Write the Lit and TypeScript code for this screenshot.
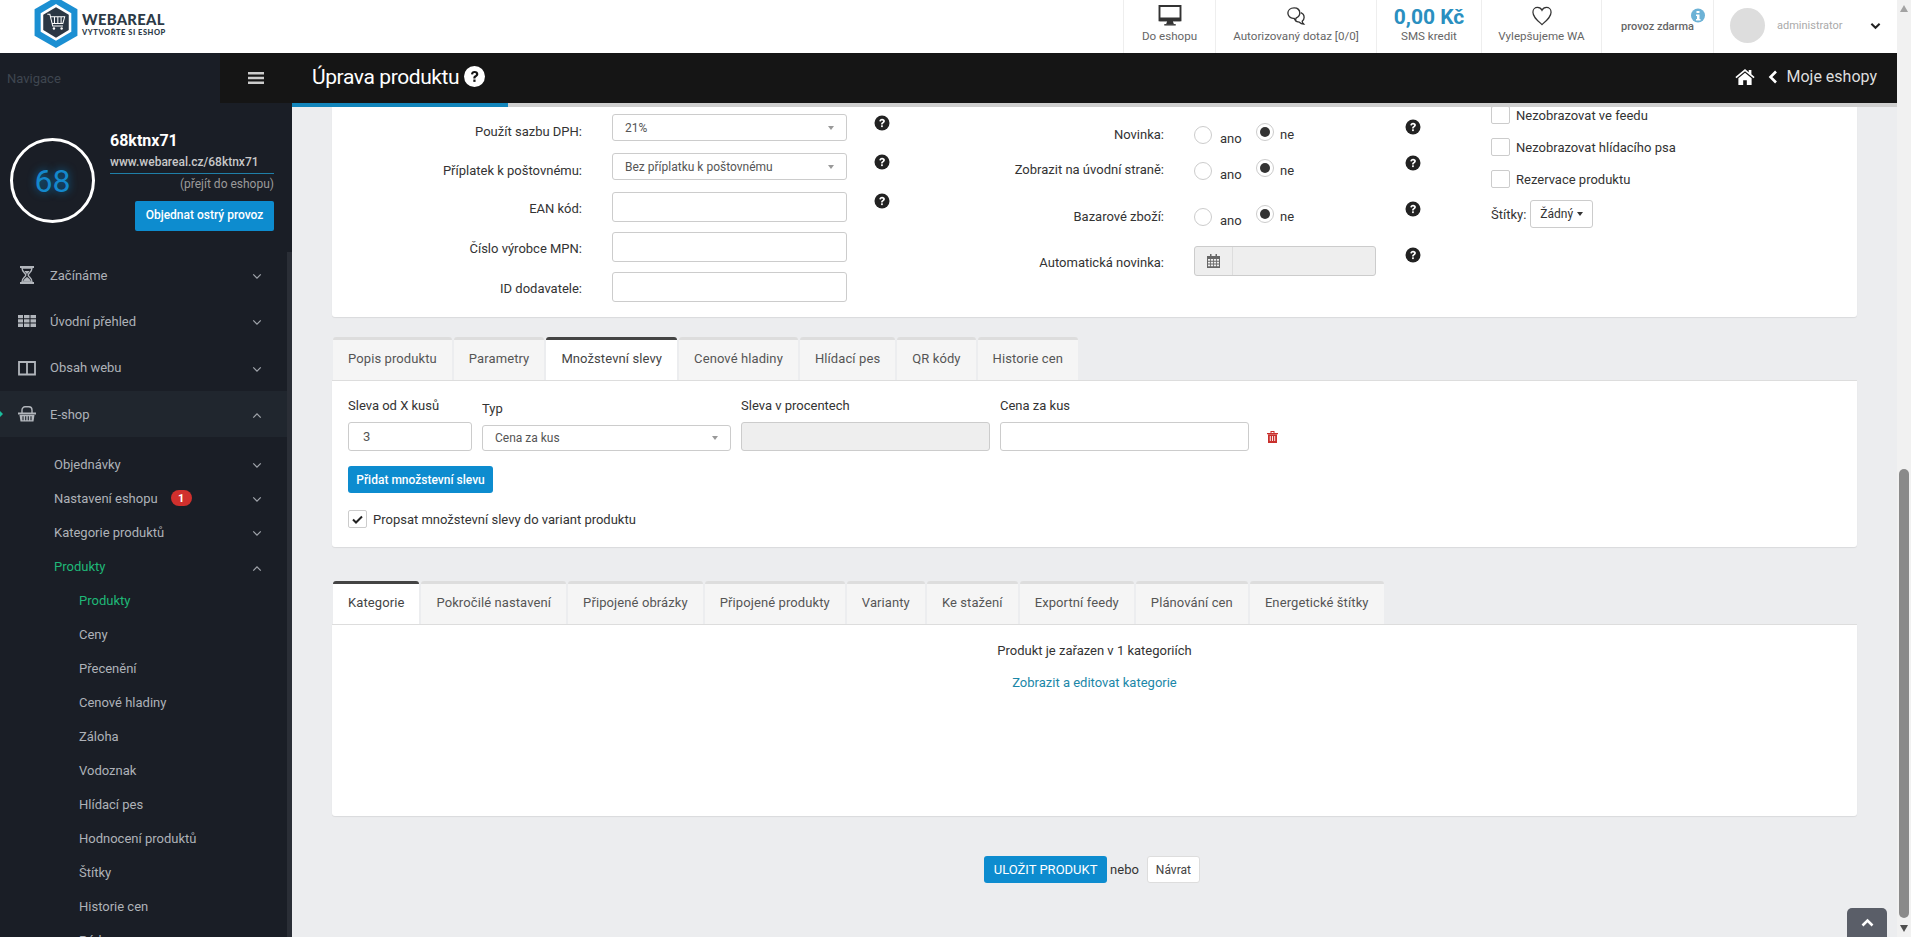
import { LitElement, css, html, svg } from 'lit'
import { customElement } from 'lit/decorators.js'

const chevronDown = html`<svg class="chev" viewBox="0 0 12 8"><path d="M1.5 1.5 6 6l4.5-4.500" fill="none" stroke="currentColor" stroke-width="1.5"/></svg>`
const chevronUp = html`<svg class="chev" viewBox="0 0 12 8"><path d="M1.5 6.500 6 2l4.5 4.500" fill="none" stroke="currentColor" stroke-width="1.5"/></svg>`

const helpIcon = html`<svg class="help" viewBox="0 0 16 16">
  <circle cx="8" cy="8" r="7.5" fill="#222"/>
  <path d="M5.300 6.300C5.400 4.700 6.500 3.800 8.100 3.800c1.600 0 2.800.9 2.800 2.300 0 1.100-.6 1.700-1.400 2.200-.6.400-.8.600-.8 1.200H7.100c0-1.200.3-1.700 1.100-2.200.6-.4.900-.6.900-1.100 0-.5-.4-.8-1-.8-.7 0-1.100.4-1.100 1z" fill="#fff"/>
  <rect x="7.100" y="10.300" width="1.700" height="1.800" fill="#fff"/>
</svg>`

const icons: Record<string, unknown> = {
  hourglass: svg`<path d="M2 1h14M2 17h14" stroke="currentColor" stroke-width="2" fill="none"/><path d="M4 2c0 4.500 3.800 5 3.800 7S4 11.500 4 16h10c0-4.500-3.800-5-3.800-7S14 6.500 14 2z" fill="none" stroke="currentColor" stroke-width="1.400"/><path d="M6.500 5h5c-.5 1.500-2.500 2.500-2.500 3.500C9 7.500 7 6.500 6.500 5zM5 15.500c.5-2.500 3-3.500 4-4.500 1 1 3.500 2 4 4.500z" fill="currentColor"/>`,
  grid: svg`<path d="M0 3h5v3.300H0zM6 3h5.500v3.300H6zM12.500 3H18v3.300h-5.500zM0 7.300h5v3.300H0zM6 7.300h5.500v3.300H6zM12.500 7.300H18v3.300h-5.500zM0 11.600h5v3.300H0zM6 11.600h5.500v3.300H6zM12.500 11.600H18v3.300h-5.500z" fill="currentColor"/>`,
  columns: svg`<path d="M1 3h16v12.500H1zM9 3v12.500" fill="none" stroke="currentColor" stroke-width="1.800"/>`,
  basket: svg`<path d="M4 8V5c0-2 1.500-3.200 3-3.200h4c1.500 0 3 1.200 3 3.200v3" fill="none" stroke="currentColor" stroke-width="1.400"/><path d="M0 7.500h18v2H0zM1.500 10h15l-1 6.500h-13z" fill="currentColor"/><path d="M5 11.300v4M7.700 11.300v4M10.300 11.300v4M13 11.300v4" stroke="#1f252d" stroke-width="1.100"/>`,
}

type MenuItem = { label: string; icon?: string; open?: boolean; active?: boolean; badge?: string }

const mainMenu: MenuItem[] = [
  { label: 'Začínáme', icon: 'hourglass' },
  { label: 'Úvodní přehled', icon: 'grid' },
  { label: 'Obsah webu', icon: 'columns' },
  { label: 'E-shop', icon: 'basket', open: true, active: true },
]
const subMenu: MenuItem[] = [
  { label: 'Objednávky' },
  { label: 'Nastavení eshopu', badge: '1' },
  { label: 'Kategorie produktů' },
  { label: 'Produkty', open: true, active: true },
]
const subSubMenu = ['Produkty', 'Ceny', 'Přecenění', 'Cenové hladiny', 'Záloha', 'Vodoznak', 'Hlídací pes', 'Hodnocení produktů', 'Štítky', 'Historie cen', 'Párky']

const tabsTop = ['Popis produktu', 'Parametry', 'Množstevní slevy', 'Cenové hladiny', 'Hlídací pes', 'QR kódy', 'Historie cen']
const tabsBottom = ['Kategorie', 'Pokročilé nastavení', 'Připojené obrázky', 'Připojené produkty', 'Varianty', 'Ke stažení', 'Exportní feedy', 'Plánování cen', 'Energetické štítky']

@customElement('app-root')
export class AppRoot extends LitElement {
  static styles = css`
    :host {
      display: block;
      width: 1911px;
      height: 937px;
      overflow: hidden;
      position: relative;
      font-family: Roboto, "Liberation Sans", sans-serif;
      font-size: 13px;
      color: #333;
      background: #ecedef;
    }
    * { box-sizing: border-box; }
    .page { display: flex; height: 937px; }
    .viewport { width: 1897px; display: flex; flex-direction: column; }

    /* native looking page scrollbar */
    .scrollbar { width: 14px; background: #f1f1f1; display: flex; flex-direction: column; align-items: center; justify-content: space-between; }
    .scrollbar .track { flex: 1; width: 100%; padding-top: 452px; padding-bottom: 2px; display: flex; justify-content: center; }
    .scrollbar .thumb { width: 10px; height: 100%; background: #8a8a8a; border-radius: 5px; }
    .arrow { width: 0; height: 0; border-left: 4.5px solid transparent; border-right: 4.5px solid transparent; margin: 5px 0; }
    .arrow.up { border-bottom: 7px solid #a3a3a3; }
    .arrow.down { border-top: 7px solid #505050; }

    /* top white bar */
    header { height: 53px; background: #fff; display: flex; flex: none; }
    .logo { display: flex; align-items: flex-start; padding-left: 32px; flex: 1; }
    .logo svg { width: 48px; height: 50px; display: block; }
    .logo-text { margin-left: 2px; padding-top: 11px; color: #2c3a47; font-family: Lato, sans-serif; font-weight: 900; }
    .logo-text b { display: block; font-size: 14.8px; line-height: 16px; letter-spacing: .3px; font-weight: 900; }
    .logo-text span { display: block; font-size: 7.5px; line-height: 9px; margin-top: 1px; letter-spacing: .55px; }
    .hitem { border-left: 1px solid #eee; display: flex; flex-direction: column; align-items: center; padding-top: 5px; font-size: 11.6px; color: #666; position: relative; }
    .hitem svg { display: block; height: 21px; }
    .hitem .lbl { line-height: 14px; margin-top: 3px; white-space: nowrap; }
    .hitem.w1 { width: 92px; } .hitem.w2 { width: 161px; } .hitem.w3 { width: 105px; } .hitem.w4 { width: 120px; } .hitem.w5 { width: 112px; }
    .kredit { color: #2a8fc0; font-size: 21px; font-weight: 700; line-height: 24px; margin-bottom: -3px; }
    .hitem.w5 { font-size: 11px; }
    .hitem.w5 .lbl { margin-top: 15px; font-weight: 500; }
    .info { position: absolute; right: 8px; top: 5px; width: 14px; height: 15px; }
    .user { width: 184px; border-left: 1px solid #eee; display: flex; align-items: center; padding: 0 0 2px 16px; color: #aaa; font-size: 11px; }
    .avatar { width: 35px; height: 35px; background: #ddd; border-radius: 50%; margin-right: 12px; }
    .user svg { width: 11px; height: 8px; margin-left: 27px; color: #222; }

    .below { flex: 1; display: flex; min-height: 0; }

    /* sidebar */
    aside { width: 292px; background: #1a1e26; display: flex; flex-direction: column; flex: none; overflow: hidden; }
    .navsearch { height: 50px; display: flex; flex: none; justify-content: space-between; align-items: center; padding-left: 7px; color: #3f4650; font-size: 13px; }
    .burger { width: 72px; height: 50px; background: #151515; display: flex; align-items: center; justify-content: center; }
    .burger svg { width: 16px; height: 14px; }
    .profile { height: 149px; flex: none; display: flex; padding: 32px 18px 0 10px; }
    .ring { width: 85px; height: 85px; border: 3px solid #fff; border-radius: 50%; display: flex; align-items: center; justify-content: center; margin-top: 3px; color: #1488cc; font-size: 32px; text-shadow: 0 0 8px #0d6ea8; }
    .pinfo { margin-left: 15px; width: 164px; }
    .pname { color: #fff; font-weight: 700; font-size: 16px; line-height: 20px; margin-top: -4px; }
    .purl { color: #c9c9c9; font-size: 12px; font-weight: 500; line-height: 16px; margin-top: 3px; padding-bottom: 3px; border-bottom: 1px solid #1f7fa8; }
    .pgo { color: #9a9a9a; font-size: 12px; text-align: right; line-height: 16px; margin-top: 2px; }
    .pbtn { display: block; width: 139px; height: 30px; line-height: 29px; text-align: center; background: #0d8ccf; color: #fff; border-radius: 2px; margin: 9px 0 0 auto; font-size: 12px; font-weight: 500; }
    .menuwrap { flex: 1; display: flex; min-height: 0; overflow: hidden; }
    nav { flex: 1; color: #aeb2b8; font-size: 13px; min-width: 0; }
    .sbar { width: 5px; background: #2a2e36; flex: none; }
    .m1 { height: 46.3px; display: flex; align-items: center; padding: 0 25px 0 18px; position: relative; }
    .m1.active { background: #20262e; }
    .m1.active::before { content: ""; position: absolute; left: 0; top: 20px; border-left: 3px solid #1abc9c; border-top: 3px solid transparent; border-bottom: 3px solid transparent; }
    .m1 svg.ic { width: 18px; height: 18px; margin-right: 14px; flex: none; color: #b2b6bc; }
    .m1 span, .m2 span { flex: 1; }
    .chev { width: 10px; height: 7px; color: #a0a4aa; flex: none; margin-top: 3px; }
    .sub { padding-top: 10px; }
    .m2 { height: 34.1px; display: flex; align-items: center; padding: 0 25px 0 54px; }
    .m2 span em { font-style: normal; display: inline-flex; width: 21px; height: 16px; border-radius: 8px; background: #d0302d; color: #fff; font-size: 11px; font-weight: 700; align-items: center; justify-content: center; margin-left: 13px; vertical-align: 1px; }
    .m2.active span { color: #1fb978; }
    .m3 { height: 34px; display: flex; align-items: center; padding-left: 79px; }
    .m3.active { color: #1fb978; }

    /* main area */
    main { flex: 1; display: flex; flex-direction: column; min-width: 0; }
    .titlebar { height: 54px; flex: none; background: #151515; border-bottom: 4px solid #cfcfcf; position: relative; display: flex; align-items: center; justify-content: space-between; padding: 0 20px 3px 20px; color: #fff; }
    .titlebar::after { content: ""; position: absolute; left: 0; bottom: -4px; width: 216px; height: 4px; background: #1285bb; }
    .titlebar h1 { margin: 0; font-weight: 400; font-size: 21px; letter-spacing: -.4px; display: flex; align-items: center; gap: 5px; }
    .titlebar h1 svg { width: 21px; height: 21px; }
    .crumb { display: flex; align-items: center; font-size: 16px; color: #ddd; }
    .crumb svg.home { width: 20px; height: 16px; margin-right: 13px; }
    .crumb svg.back { width: 10px; height: 14px; margin-right: 8px; }

    .content { flex: 1; padding: 0 40px; display: flex; flex-direction: column; min-height: 0; overflow: hidden; position: relative; }
    .card { background: #fff; box-shadow: 0 1px 1px rgba(0,0,0,.08); border-radius: 0 0 3px 3px; }
    .top { height: 210px; display: grid; grid-template-columns: 568px 591px 1fr; flex: none; }

    .col1 { padding-top: 7px; }
    .frow { display: grid; grid-template-columns: 250px 235px 16px; column-gap: 30px; margin-bottom: 10px; }
    .frow label { text-align: right; line-height: 16px; margin-top: 9px; white-space: nowrap; }
    .frow.sel { margin-bottom: 12px; }
    .frow.sel label { margin-top: 10px; }
    .frow .help { margin: 1px 0 0 -3px; }
    .help { width: 16px; height: 16px; display: block; }
    .input { border: 1px solid #ccc; border-radius: 3px; background: #fff; height: 30px; display: flex; align-items: center; padding: 0 14px; color: #555; font-size: 12px; }
    .input.num { font-size: 13px; }
    .input.disabled { background: #eee; }
    .select { height: 27px; justify-content: space-between; padding: 0 12px; color: #555; font-size: 12px; }
    .select i { border-top: 4px solid #999; border-left: 3.5px solid transparent; border-right: 3.5px solid transparent; }

    .col2 { padding-top: 16px; }
    .rrow { display: grid; grid-template-columns: 264px 182px 16px; column-gap: 30px; }
    .rrow label { text-align: right; line-height: 16px; margin-top: 4px; white-space: nowrap; }
    .rrow .help { margin: -4px 0 0 -1px; }
    .rrow.r1 { height: 36px; } .rrow.r2 { height: 46px; } .rrow.r3 { height: 45px; }
    .rrow.r2 label { margin-top: 3px; }
    .radios { display: flex; align-items: flex-start; height: 22px; }
    .radio { width: 18px; height: 18px; border: 1px solid #ccc; border-radius: 50%; background: #fff; display: flex; align-items: center; justify-content: center; flex: none; }
    .radio.on::after { content: ""; width: 10px; height: 10px; border-radius: 50%; background: #333; }
    .radio.off { margin-top: 3px; }
    .radios .t1 { margin: 8px 15px 0 8px; line-height: 16px; width: 21px; }
    .radios .t2 { margin: 4px 0 0 6px; line-height: 16px; }
    .date { display: flex; height: 30px; width: 182px; margin-top: -4px; border: 1px solid #ccc; border-radius: 3px; background: #eee; }
    .date b { width: 38px; border-right: 1px solid #ddd; display: flex; align-items: center; justify-content: center; }
    .date svg { width: 13px; height: 14px; }
    .rrow.r4 label { margin-top: 5px; }
    .rrow.r4 .help { margin-top: -3px; }

    .col3 { margin-top: -1px; }
    .chk { display: flex; align-items: center; height: 18px; margin-bottom: 14px; }
    .box { width: 19px; height: 18px; border: 1px solid #ccc; border-radius: 2px; background: #fff; margin-right: 6px; flex: none; display: flex; align-items: center; justify-content: center; }
    .box svg { width: 11px; height: 9px; }
    .stitky { display: flex; align-items: center; margin-top: -2px; gap: 4px; }
    .ddbtn { height: 28px; padding: 0 9px; border: 1px solid #ccc; border-radius: 3px; background: #fff; display: flex; align-items: center; gap: 4px; color: #333; font-size: 12px; }
    .ddbtn i { border-top: 4px solid #333; border-left: 3.5px solid transparent; border-right: 3.5px solid transparent; }

    .tabs { display: flex; gap: 2px; padding-left: 1px; height: 44px; flex: none; }
    .tab { padding: 0 15px 2px; letter-spacing: .1px; background: #f5f5f5; border-top: 3px solid #ddd; border-radius: 3px 3px 0 0; border-bottom: 1px solid #ddd; display: flex; align-items: center; color: #555; white-space: nowrap; line-height: 16px; }
    .tab.active { background: #fff; border-top-color: #444; border-bottom-color: #fff; color: #444; }
    .tab1 { margin-top: 20px; }
    .tab2 { margin-top: 34px; }

    .panel1 { height: 167px; border-top: 1px solid #ddd; margin-top: -1px; padding: 17px 16px 0; flex: none; }
    .dgrid { display: grid; grid-template-columns: 124px 249px 249px 249px 14px; column-gap: 10px; align-items: end; }
    .dgrid .f { display: flex; flex-direction: column; }
    .dgrid .f label { line-height: 16px; margin-bottom: 8px; }
    .dgrid .f .input { height: 29px; }
    .dgrid .f .select { height: 26px; }
    .trash { width: 11px; height: 12px; margin: 0 0 8px 8px; display: block; }
    .btn { background: #0d8ccf; color: #fff; border-radius: 3px; display: inline-flex; align-items: center; justify-content: center; font-size: 12px; }
    .btn.add { width: 145px; height: 27px; margin-top: 15px; font-weight: 500; }
    .chk.prop { margin: 17px 0 0; }

    .panel2 { height: 192px; border-top: 1px solid #ddd; margin-top: -1px; padding-top: 18px; text-align: center; flex: none; }
    .panel2 p { margin: 0; line-height: 16px; }
    .panel2 a { display: block; margin-top: 16px; line-height: 16px; color: #1b87a8; }

    .actions { display: flex; align-items: center; justify-content: center; margin-top: 40px; padding-right: 5px; gap: 3px; }
    .actions .btn { width: 123px; height: 27px; font-size: 13px; }
    .actions .back { margin-left: 5px; width: 53px; height: 27px; border: 1px solid #ddd; border-radius: 3px; background: #fff; display: flex; align-items: center; justify-content: center; font-size: 12px; color: #444; }
    .totop { position: absolute; left: 1847px; top: 908px; width: 40px; height: 29px; background: #5a5e68; border-radius: 5px 5px 0 0; display: flex; align-items: center; justify-content: center; }
    .totop svg { width: 13px; height: 9px; }
  `

  private renderSidebar() {
    return html`
      <aside>
        <div class="navsearch">
          Navigace
          <div class="burger"><svg viewBox="0 0 16 14"><path d="M0 1h16v2.500H0zM0 5.800h16v2.500H0zM0 10.500h16V13H0z" fill="#ccc"/></svg></div>
        </div>
        <div class="profile">
          <div class="ring">68</div>
          <div class="pinfo">
            <div class="pname">68ktnx71</div>
            <div class="purl">www.webareal.cz/68ktnx71</div>
            <div class="pgo">(přejít do eshopu)</div>
            <a class="pbtn">Objednat ostrý provoz</a>
          </div>
        </div>
        <div class="menuwrap">
          <nav>
            ${mainMenu.map(m => html`
              <div class="m1 ${m.active ? 'active' : ''}">
                <svg class="ic" viewBox="0 0 18 18">${icons[m.icon!]}</svg>
                <span>${m.label}</span>
                ${m.open ? chevronUp : chevronDown}
              </div>`)}
            <div class="sub">
              ${subMenu.map(m => html`
                <div class="m2 ${m.active ? 'active' : ''}">
                  <span>${m.label}${m.badge ? html`<em>${m.badge}</em>` : ''}</span>
                  ${m.open ? chevronUp : chevronDown}
                </div>`)}
              ${subSubMenu.map((m, i) => html`<div class="m3 ${i === 0 ? 'active' : ''}">${m}</div>`)}
            </div>
          </nav>
          <div class="sbar"></div>
        </div>
      </aside>
    `
  }

  private renderRadios(label: string, cls: string) {
    return html`
      <div class="rrow ${cls}">
        <label>${label}</label>
        <div class="radios">
          <div class="radio off"></div><span class="t1">ano</span>
          <div class="radio on"></div><span class="t2">ne</span>
        </div>
        ${helpIcon}
      </div>
    `
  }

  private renderTopCard() {
    return html`
      <div class="card top">
        <div class="col1">
          <div class="frow sel"><label>Použít sazbu DPH:</label><div class="input select">21%<i></i></div>${helpIcon}</div>
          <div class="frow sel"><label>Příplatek k poštovnému:</label><div class="input select">Bez příplatku k poštovnému<i></i></div>${helpIcon}</div>
          <div class="frow"><label>EAN kód:</label><div class="input"></div>${helpIcon}</div>
          <div class="frow"><label>Číslo výrobce MPN:</label><div class="input"></div></div>
          <div class="frow"><label>ID dodavatele:</label><div class="input"></div></div>
        </div>
        <div class="col2">
          ${this.renderRadios('Novinka:', 'r1')}
          ${this.renderRadios('Zobrazit na úvodní straně:', 'r2')}
          ${this.renderRadios('Bazarové zboží:', 'r3')}
          <div class="rrow r4">
            <label>Automatická novinka:</label>
            <div class="date"><b><svg viewBox="0 0 13 14"><path d="M3 0h1.500v2H3zM8.500 0H10v2H8.500zM0 2h13v12H0z" fill="#666"/><path d="M1 5h2.200v1.800H1zM4 5h2.200v1.800H4zM7 5h2.200v1.800H7zM10 5h2v1.800h-2zM1 7.700h2.200v1.800H1zM4 7.700h2.200v1.800H4zM7 7.700h2.200v1.800H7zM10 7.700h2v1.800h-2zM1 10.400h2.200v1.800H1zM4 10.400h2.200v1.800H4zM7 10.400h2.200v1.800H7zM10 10.400h2v1.800h-2z" fill="#eee"/></svg></b></div>
            ${helpIcon}
          </div>
        </div>
        <div class="col3">
          <div class="chk"><div class="box"></div>Nezobrazovat ve feedu</div>
          <div class="chk"><div class="box"></div>Nezobrazovat hlídacího psa</div>
          <div class="chk"><div class="box"></div>Rezervace produktu</div>
          <div class="stitky">Štítky: <div class="ddbtn">Žádný <i></i></div></div>
        </div>
      </div>
    `
  }

  render() {
    return html`
      <div class="page">
        <div class="viewport">
          <header>
            <div class="logo">
              <svg viewBox="0 0 46 49">
                <path d="M23 -3 44 9v26L23 47 2 35V9z" fill="#1b8fd2"/>
                <path d="M23 4 38 13v18L23 40 8 31V13z" fill="#fff"/>
                <path d="M23 7 35.500 14.500v15L23 37 10.500 29.500v-15z" fill="#2b3744"/>
                <path d="M14.500 14h2.500l2.800 11.500h10M18 16.500h13.500l-1.800 6.500H19.500M21.500 17v6M24.800 17v6M28 17v6" fill="none" stroke="#fff" stroke-width="1"/>
                <circle cx="21" cy="28" r="1.200" fill="#fff"/><circle cx="28.500" cy="28" r="1.200" fill="#fff"/>
              </svg>
              <div class="logo-text"><b>WEBAREAL</b><span>VYTVOŘTE SI ESHOP</span></div>
            </div>
            <div class="hitem w1">
              <svg viewBox="0 0 24 22" width="24"><path d="M1 1h22v15H1z" fill="#fff" stroke="#333" stroke-width="2"/><path d="M1 13h22v4H1zM9 17h6l1 3H8z" fill="#333"/><path d="M6 20h12v1.500H6z" fill="#333"/></svg>
              <div class="lbl">Do eshopu</div>
            </div>
            <div class="hitem w2">
              <svg viewBox="0 0 24 22" width="24"><path d="M10 3C6 3 3.500 5.500 3.500 8.500S6 14 9 14l1 0c.5 1 1 1.500 1.500 2 0-1 .3-1.500.8-2.500 2-.8 3.700-2.500 3.700-5C16 5.500 14 3 10 3z" fill="#fff" stroke="#333" stroke-width="1.400"/><path d="M17 8c2.500 1 3.500 3 3.500 5s-1 3-2 4c0 1 .5 2 1.500 3-2 0-3.500-1-4.500-2-2 0-3.500-.8-4.500-2" fill="none" stroke="#333" stroke-width="1.400"/></svg>
              <div class="lbl">Autorizovaný dotaz [0/0]</div>
            </div>
            <div class="hitem w3">
              <div class="kredit">0,00 Kč</div>
              <div class="lbl">SMS kredit</div>
            </div>
            <div class="hitem w4">
              <svg viewBox="0 0 24 22" width="24"><path d="M12 20.500C7 16 2.500 12.500 2.500 7.500 2.500 4.500 4.800 2.500 7.300 2.500c2 0 3.700 1 4.700 3 1-2 2.700-3 4.700-3 2.500 0 4.800 2 4.800 5 0 5-4.500 8.500-9.500 13z" fill="#fff" stroke="#333" stroke-width="1.300"/></svg>
              <div class="lbl">Vylepšujeme WA</div>
            </div>
            <div class="hitem w5">
              <svg class="info" viewBox="0 0 14 15"><circle cx="7" cy="7.500" r="7" fill="#6cb2d6"/><path d="M5.500 3h3v2h-3zM5 6.500h3.500V11h1v1.500h-4.500V11h1V8H5z" fill="#fff"/></svg>
              <div class="lbl">provoz zdarma</div>
            </div>
            <div class="user">
              <div class="avatar"></div>administrator
              <svg viewBox="0 0 12 8"><path d="M1.500 1.500 6 6l4.500-4.500" fill="none" stroke="currentColor" stroke-width="2.200"/></svg>
            </div>
          </header>
          <div class="below">
            ${this.renderSidebar()}
            <main>
              <div class="titlebar">
                <h1>Úprava produktu <svg viewBox="0 0 16 16"><circle cx="8" cy="8" r="8" fill="#fff"/><path d="M5.300 6.300C5.400 4.700 6.500 3.800 8.100 3.800c1.600 0 2.800.9 2.800 2.300 0 1.100-.6 1.700-1.400 2.200-.6.400-.8.600-.8 1.200H7.100c0-1.200.3-1.700 1.100-2.200.6-.4.900-.6.900-1.100 0-.5-.4-.8-1-.8-.7 0-1.100.4-1.100 1z" fill="#151515"/><rect x="7.100" y="10.300" width="1.700" height="1.800" fill="#151515"/></svg></h1>
                <div class="crumb">
                  <svg class="home" viewBox="0 0 18 15"><path d="M9 0 0 7.500l1 1.200L9 2l8 6.700 1-1.200-3-2.500V1h-2.500v2z" fill="#fff"/><path d="M9 3.500 2.800 8.700V15h4.500v-4.500h3.400V15h4.500V8.700z" fill="#fff"/></svg>
                  <svg class="back" viewBox="0 0 9 14"><path d="M7.500 1.500 2 7l5.500 5.500" fill="none" stroke="#fff" stroke-width="2.600"/></svg>
                  Moje eshopy
                </div>
              </div>
              <div class="content">
                ${this.renderTopCard()}
                <div class="tabs tab1">${tabsTop.map((t, i) => html`<div class="tab ${i === 2 ? 'active' : ''}">${t}</div>`)}</div>
                <div class="card panel1">
                  <div class="dgrid">
                    <div class="f"><label>Sleva od X kusů</label><div class="input num">3</div></div>
                    <div class="f"><label>Typ</label><div class="input select">Cena za kus<i></i></div></div>
                    <div class="f"><label>Sleva v procentech</label><div class="input disabled"></div></div>
                    <div class="f"><label>Cena za kus</label><div class="input"></div></div>
                    <svg class="trash" viewBox="0 0 11 12"><path d="M0 2h11v1.300H0zM3.500 0h4v2h-1V1h-2v1h-1zM1 3.500h9V12H1z" fill="#c9302c"/><path d="M3.300 5v5M5.500 5v5M7.700 5v5" stroke="#fff" stroke-width=".9"/></svg>
                  </div>
                  <a class="btn add">Přidat množstevní slevu</a>
                  <div class="chk prop"><div class="box"><svg viewBox="0 0 11 9"><path d="M1 4.500 4 7.500 10 1.500" fill="none" stroke="#222" stroke-width="2"/></svg></div>Propsat množstevní slevy do variant produktu</div>
                </div>
                <div class="tabs tab2">${tabsBottom.map((t, i) => html`<div class="tab ${i === 0 ? 'active' : ''}">${t}</div>`)}</div>
                <div class="card panel2">
                  <p>Produkt je zařazen v 1 kategoriích</p>
                  <a>Zobrazit a editovat kategorie</a>
                </div>
                <div class="actions">
                  <a class="btn">ULOŽIT PRODUKT</a><span>nebo</span><a class="back">Návrat</a>
                </div>
              </div>
            </main>
          </div>
        </div>
        <div class="scrollbar">
          <div class="arrow up"></div>
          <div class="track"><div class="thumb"></div></div>
          <div class="arrow down"></div>
        </div>
      </div>
      <div class="totop"><svg viewBox="0 0 13 9"><path d="M1.500 7.500 6.500 2.500l5 5" fill="none" stroke="#fff" stroke-width="2.600"/></svg></div>
    `
  }
}

declare global {
  interface HTMLElementTagNameMap {
    'app-root': AppRoot
  }
}
